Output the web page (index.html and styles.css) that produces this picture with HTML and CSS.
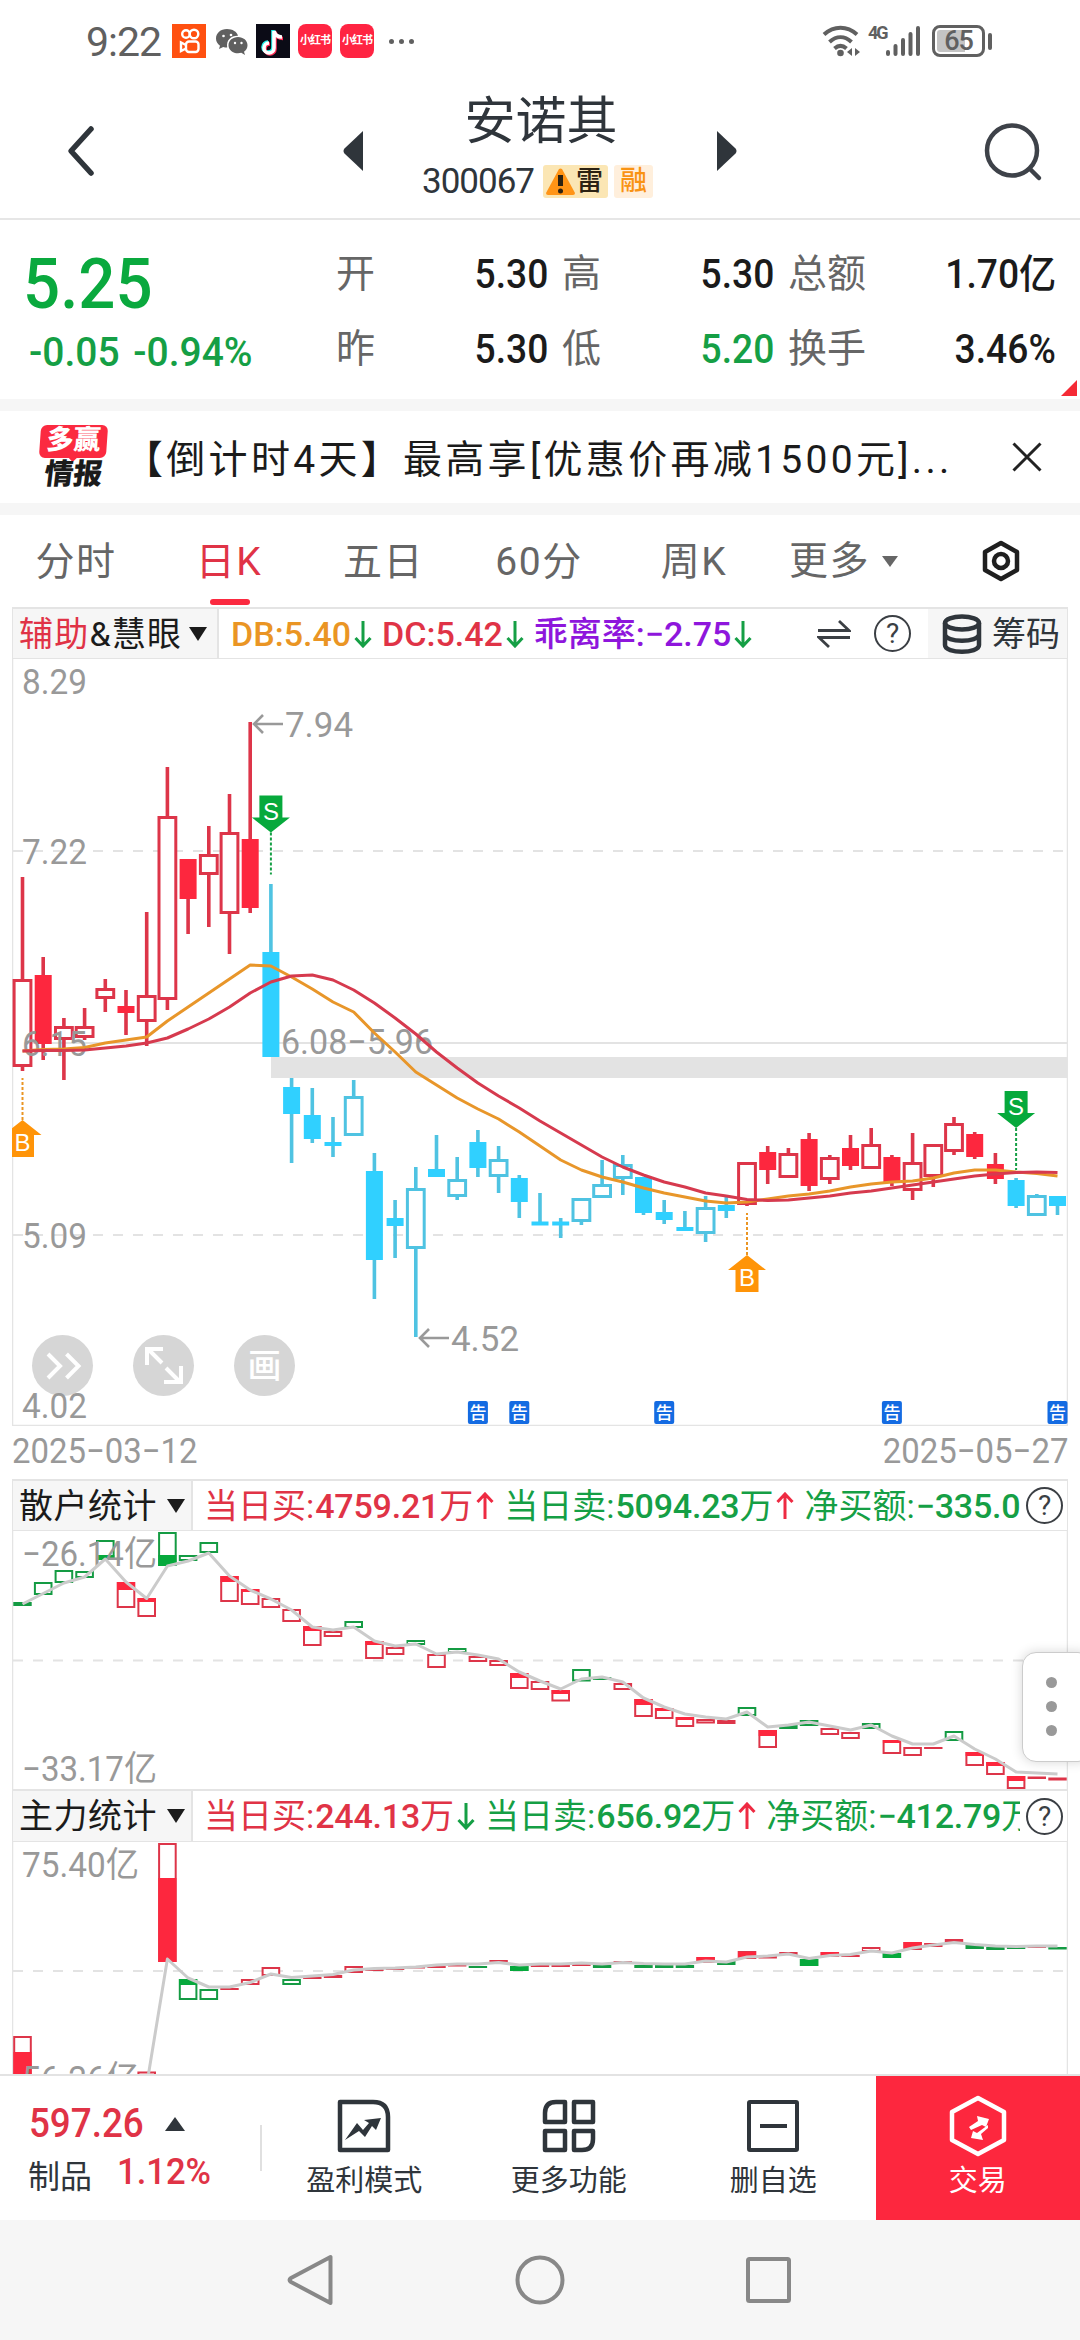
FILE: index.html
```html
<!DOCTYPE html>
<html lang="zh-CN">
<head>
<meta charset="utf-8">
<title>安诺其 300067</title>
<link rel="stylesheet" href="styles.css">
</head>
<body>
<div class="status">
  <div class="status-left">
    <span class="clock">9:22</span>
    <svg class="app kuaishou" viewBox="0 0 34 34"><rect width="34" height="34" fill="#ff5010"/><g fill="none" stroke="#fff" stroke-width="2.4"><circle cx="14" cy="10" r="3.8"/><circle cx="22" cy="10" r="4.3"/><rect x="14" y="17.500" width="12.500" height="10.500" rx="3"/><path d="M14 21l-5-2.500v8.500l5-2.500"/></g></svg>
    <svg class="app wechat" viewBox="0 0 34 34"><path fill="#606060" d="M13 5C6.500 5 2 9.200 2 14.500c0 3 1.500 5.500 4 7.200L5 25l4.200-2.100c1.300.4 2.600.6 4 .6C12 16 17 11.500 24 11.700 23 7.800 18.500 5 13 5z"/><path fill="#606060" d="M24 13c-5.300 0-9.500 3.600-9.500 8.200 0 4.500 4.200 8.100 9.500 8.100 1.200 0 2.300-.2 3.300-.5L31 31l-1-3.200c2.200-1.500 3.500-3.900 3.500-6.600C33.500 16.600 29.300 13 24 13z"/><g fill="#fff"><circle cx="9.500" cy="12" r="1.300"/><circle cx="17" cy="11" r="1.300"/><circle cx="21" cy="19" r="1.200"/><circle cx="27.500" cy="19" r="1.200"/></g></svg>
    <svg class="app" viewBox="0 0 34 34"><rect width="34" height="34" fill="#0b0b16"/><g fill="none" stroke-width="3.600"><path stroke="#25f4ee" d="M17 6v17a5 5 0 1 1-5-5M17 7c1 4 4 6 8 6"/><path stroke="#fe2c55" d="M19 8v17a5 5 0 1 1-5-5M19 8c1 4 4 6.500 8 6.500"/><path stroke="#fff" d="M18 7v17a5 5 0 1 1-5-5M18 7c1 4 4 6 8 6"/></g></svg>
    <span class="xhs">小红书</span>
    <span class="xhs">小红书</span>
    <span class="dots"><i></i><i></i><i></i></span>
  </div>
  <div class="status-right">
    <svg width="38" height="32" viewBox="0 0 38 32"><g fill="none" stroke="#606060" stroke-width="4"><path d="M2 9.500C12 .500 25 .500 35 9.500"/><path d="M7.500 17c7-6.500 15-6.500 22 0"/><path d="M12.500 23.500c4-3.500 8-3.500 12 0"/></g><circle cx="18.500" cy="28" r="3.300" fill="#606060"/><path fill="#606060" d="M30 23v8l-5-4zM33 23v8l5-4z"/></svg>
    <span class="net">4G</span>
    <svg class="signal" width="34" height="32" viewBox="0 0 34 32"><path stroke="#606060" stroke-width="4" stroke-linecap="round" d="M2 27v2M9.500 21v8M17 15v14M24.500 9v20M32 3v26"/></svg>
    <span class="battery"><b>65</b></span><i class="nub"></i>
  </div>
</div>

<header class="header">
  <svg class="back" width="32" height="54" viewBox="0 0 32 54"><path d="M26 5L6 27l20 22" fill="none" stroke="#2f353b" stroke-width="5.500" stroke-linecap="round" stroke-linejoin="round"/></svg>
  <svg class="prev" width="20" height="40" viewBox="0 0 20 40"><path d="M20 0v40L1.500 22.500q-2-2.500 0-5z" fill="#2f353b"/></svg>
  <div class="stock">
    <h1>安诺其</h1>
    <div class="code"><span>300067</span><em class="tag-risk"><svg width="32" height="32" viewBox="0 0 32 32"><path d="M15 4a2.500 2.500 0 0 1 3 0l13 24q0 2-2 2H4q-2 0-2-2z" fill="#ff9416"/><path d="M16.500 10v11" stroke="#2c2212" stroke-width="5"/><circle cx="16.500" cy="26" r="2.500" fill="#2c2212"/></svg>雷</em><em class="tag-margin">融</em></div>
  </div>
  <svg class="next" width="20" height="40" viewBox="0 0 20 40"><path d="M0 0v40L18.500 22.500q2-2.500 0-5z" fill="#2f353b"/></svg>
  <svg class="search" width="60" height="60" viewBox="0 0 60 60"><g fill="none" stroke="#3e4249" stroke-width="4.500" stroke-linecap="round"><circle cx="29" cy="28.500" r="25"/><path d="M47 47l9 9"/></g></svg>
</header>

<section class="quote">
  <div class="price">
    <strong>5.25</strong>
    <div class="chg"><span>-0.05</span><span>-0.94%</span></div>
  </div>
  <dl class="stats">
    <div><dt>开</dt><dd>5.30</dd></div><div><dt>高</dt><dd>5.30</dd></div><div><dt>总额</dt><dd>1.70亿</dd></div>
    <div><dt>昨</dt><dd>5.30</dd></div><div><dt>低</dt><dd class="down">5.20</dd></div><div><dt>换手</dt><dd>3.46%</dd></div>
  </dl>
  <i class="corner"></i>
</section>

<section class="banner">
  <div class="brand"><b>多赢</b><span>情报</span></div>
  <p>【倒计时4天】最高享[优惠价再减1500元]...</p>
  <svg width="30" height="30" viewBox="0 0 30 30"><path d="M1.500 1.500l27 27M28.500 1.500l-27 27" stroke="#222" stroke-width="3"/></svg>
</section>

<nav class="tabs">
  <span>分时</span><span class="active">日K</span><span>五日</span><span>60分</span><span>周K</span>
  <span class="more">更多<i></i></span>
  <svg width="40" height="42" viewBox="0 0 40 42"><g fill="none" stroke="#1f1f1f" stroke-width="4.500" stroke-linejoin="round"><path d="M20 3l16 9v18l-16 9-16-9V12z"/><circle cx="20" cy="21" r="7"/></g></svg>
</nav>

<main class="charts">
  <div class="ind-bar">
    <div class="ind-name main-name"><span><em>辅助</em>&amp;慧眼</span><i></i></div>
    <div class="ind-values main-values">
      <span class="orange">DB:5.40</span><svg class="arr down" viewBox="0 0 18 28"><path d="M9 1v24M1.500 18L9 26l7.500-8"/></svg>
      <span class="red">DC:5.42</span><svg class="arr down" viewBox="0 0 18 28"><path d="M9 1v24M1.500 18L9 26l7.500-8"/></svg>
      <span class="purple">乖离率:−2.75</span><svg class="arr down" viewBox="0 0 18 28"><path d="M9 1v24M1.500 18L9 26l7.500-8"/></svg>
    </div>
    <svg class="swap" width="34" height="30" viewBox="0 0 34 30"><path d="M1 11.500h31L22 2M33 18.500H2L12 28" fill="none" stroke="#3b3f44" stroke-width="2.800"/></svg>
    <span class="help">?</span>
    <div class="chips"><svg width="40" height="40" viewBox="0 0 40 40"><g fill="none" stroke="#2f353b" stroke-width="4.500"><ellipse cx="20" cy="9" rx="17" ry="6.500"/><path d="M3 9v22c0 9 34 9 34 0V9M3 20c0 9 34 9 34 0"/></g></svg>筹码</div>
  </div>
  <svg id="kline" class="plot kline" viewBox="12 659 1056 767"></svg>
  <div class="dates"><span>2025−03−12</span><span>2025−05−27</span></div>

  <div class="ind-bar">
    <div class="ind-name"><span>散户统计</span><i></i></div>
    <div class="ind-values">
      <span class="red">当日买:<b>4759.21</b>万</span><svg class="arr up" viewBox="0 0 18 28"><path d="M9 27V3M1.500 10L9 2l7.500 8"/></svg>
      <span class="green">当日卖:<b>5094.23</b>万</span><svg class="arr up" viewBox="0 0 18 28"><path d="M9 27V3M1.500 10L9 2l7.500 8"/></svg>
      <span class="green">净买额:<b>−335.0</b></span>
    </div>
    <span class="help">?</span>
  </div>
  <svg id="retail" class="plot retail" viewBox="12 1531 1056 258"></svg>

  <div class="ind-bar second">
    <div class="ind-name"><span>主力统计</span><i></i></div>
    <div class="ind-values">
      <span class="red">当日买:<b>244.13</b>万</span><svg class="arr down" viewBox="0 0 18 28"><path d="M9 1v24M1.500 18L9 26l7.500-8"/></svg>
      <span class="green">当日卖:<b>656.92</b>万</span><svg class="arr up" viewBox="0 0 18 28"><path d="M9 27V3M1.500 10L9 2l7.500 8"/></svg>
      <span class="green">净买额:<b>−412.79</b>万</span>
    </div>
    <span class="help">?</span>
  </div>
  <svg id="force" class="plot force" viewBox="12 1842 1056 234"></svg>
  <div class="handle"><i></i><i></i><i></i></div>
</main>

<footer class="actions">
  <div class="index"><div><b>597.26</b><i></i></div><div><span>制品</span><em>1.12%</em></div></div>
  <div class="action"><svg viewBox="0 0 54 54"><path d="M3 3h33q15 0 15 15v33H3z" fill="none" stroke="#2f353b" stroke-width="4.500" stroke-linejoin="round"/><path d="M8 41l12-17 6 7 6-7-5-3 17-2-5 12-4-4-7 11-6-6z" fill="#2f353b"/></svg><span>盈利模式</span></div>
  <div class="action"><svg viewBox="0 0 54 54"><g fill="none" stroke="#2f353b" stroke-width="4.500" stroke-linejoin="round"><path d="M14 3h9v20H3V14Q3 3 14 3zM32 3h19v20H32zM3 32h20v19H3zM32 32h19v8q0 11-11 11h-8z"/></g></svg><span>更多功能</span></div>
  <div class="action"><svg viewBox="0 0 54 54"><rect x="3" y="3" width="48" height="48" rx="1" fill="none" stroke="#2f353b" stroke-width="4"/><path d="M14 27h27" stroke="#2f353b" stroke-width="4"/></svg><span>删自选</span></div>
  <div class="action trade"><svg viewBox="0 0 60 62"><path d="M30 3l26 14v28L30 59 4 45V17z" fill="none" stroke="#fff" stroke-width="4.500" stroke-linejoin="round"/><path d="M21 32l9-6-1-5 12 3-3 8-4-2-11 5zM40 33l-7 6 2 6-12-2 2-7 4 2 11-8z" fill="#fff"/></svg><span>交易</span></div>
</footer>

<div class="sysnav">
  <svg width="50" height="56" viewBox="0 0 50 56"><path d="M44.500 5v46L5 30q-3-2 0-4z" stroke-linejoin="round"/></svg>
  <svg width="54" height="54" viewBox="0 0 54 54"><circle cx="27" cy="27" r="22.500"/></svg>
  <svg width="50" height="50" viewBox="0 0 50 50"><rect x="4" y="4" width="41" height="42" rx="1.500"/></svg>
</div>
<script src="chart.js"></script>
</body>
</html>
```
FILE: styles.css
```css
* { box-sizing: border-box; }
html, body { margin: 0; padding: 0; }
body {
  width: 1080px; height: 2340px; overflow: hidden;
  display: flex; flex-direction: column;
  background: #fff; color: #1b1b1b;
  font-family: Roboto, "Noto Sans CJK SC", sans-serif;
  line-height: 1;
}
em, i { font-style: normal; }
svg { display: block; flex: none; }
.red { color: #e03346; } .green { color: #159f45; } .orange { color: #ea9524; } .purple { color: #8e16dc; }

.status { height: 82px; flex: none; display: flex; justify-content: space-between; padding: 24px 88px 0 86px; color: #606060; }
.status-left, .status-right { display: flex; height: 34px; align-items: center; }
.clock { font-size: 41px; width: 86px; letter-spacing: -1px; font-weight: 400; padding-top: 2px; }
.app { width: 34px; height: 34px; margin-right: 8px; }
.xhs { width: 34px; height: 34px; border-radius: 8px; background: #ff2442; color: #fff; font-size: 11px; font-weight: 700; line-height: 33px; text-align: center; margin-right: 8px; letter-spacing: -1px; }
.dots { display: flex; gap: 5px; margin-left: 7px; }
.dots i { width: 5px; height: 5px; border-radius: 50%; background: #606060; }
.net { align-self: flex-start; font-size: 18px; font-weight: 700; letter-spacing: -2px; margin: 0 0 0 8px; width: 18px; }
.signal { margin-right: 12px; }
.battery { width: 53px; height: 32px; border: 3px solid #606060; border-radius: 8px; padding: 2px; }
.battery b { display: block; height: 22px; line-height: 23px; text-align: center; font-size: 27px; font-weight: 500; letter-spacing: -1px; background: linear-gradient(90deg, #c4c4c4 65%, transparent 65%); border-radius: 3px; }
.nub { width: 4px; height: 17px; background: #606060; border-radius: 2px; margin-left: 3px; }

.header { height: 138px; flex: none; border-bottom: 2px solid #e6e6e6; display: flex; padding-left: 65px; }
.back { margin: 42px 246px 0 0; }
.prev, .next { margin-top: 49px; }
.stock { width: 354px; text-align: center; padding-left: 2px; }
.stock h1 { margin: 13px 0 0; font-size: 51px; line-height: 54px; font-weight: 400; color: #2f353b; }
.code { display: flex; margin: 15px 0 0 57px; height: 34px; align-items: center; font-size: 35px; color: #2f353b; }
.code span { width: 121px; letter-spacing: -1px; text-align: left; }
.tag-risk, .tag-margin { display: flex; align-items: center; height: 33px; border-radius: 3px; font-size: 27px; font-weight: 500; }
.tag-risk { width: 65px; background: #fbe6b4; color: #2c2212; margin-right: 6px; }
.tag-risk svg { margin-left: 1px; }
.tag-margin { width: 39px; justify-content: center; background: #ffefdc; color: #f99313; }
.search { margin: 40px 0 0 246px; }

.quote { height: 179px; flex: none; position: relative; display: flex; border-bottom: 0; }
.price { width: 336px; padding: 31px 0 0 23px; color: #0aa93e; }
.price strong { display: block; font-size: 71px; line-height: 66px; font-weight: 500; transform: scaleX(.92); transform-origin: 0 0; }
.chg { display: flex; gap: 14px; margin: 18px 0 0 6px; font-size: 40px; line-height: 36px; font-weight: 500; color: #159f45; transform: scaleX(.975); transform-origin: 0 0; }
.stats { margin: 0; display: grid; grid-template-columns: 212px 212px 268px; column-gap: 14px; grid-template-rows: 75px 75px; padding-top: 17px; height: 179px; }
.stats div { display: flex; justify-content: space-between; align-items: center; font-size: 39px; }
.stats dt { color: #666; }
.stats dd { margin: 0; font-weight: 500; font-size: 40px; color: #1b1b1b; transform: scaleX(.93); transform-origin: 100% 0; }
.stats dd.down { color: #159f45; }
.corner { position: absolute; right: 3px; bottom: 3px; border: solid transparent; border-width: 8px; border-right-color: #f52a35; border-bottom-color: #f52a35; }

.banner { height: 116px; flex: none; border: solid #f6f6f6; border-width: 12px 0; display: flex; align-items: center; padding-left: 40px; }
.brand { width: 67px; height: 66px; text-align: center; font-weight: 900; padding-top: 1px; }
.brand b { display: block; position: relative; height: 33px; border-radius: 6px; background: #fb2a40; color: #fff; font-size: 27px; line-height: 31px; transform: skewX(-4deg); }
.brand b::after { content: ""; position: absolute; left: 29px; top: 32px; border: solid transparent; border-width: 5px 5px 0; border-top-color: #fb2a40; }
.brand span { display: block; font-size: 29px; line-height: 26px; margin-top: 3px; transform: skewX(-7deg); }
.banner p { margin: 6px 0 0 17px; width: 888px; font-size: 39px; letter-spacing: 3.300px; white-space: nowrap; }

.tabs { height: 92px; flex: none; position: relative; display: grid; grid-template-columns: 152px 154px 155px 156px 154px 145px 170px; align-items: center; justify-items: center; font-size: 39px; letter-spacing: 1.500px; color: #666; }
.tabs span { position: relative; height: 60px; line-height: 62px; }
.tabs .active { color: #e03346; }
.tabs .active::after { content: ""; position: absolute; left: 50%; bottom: -14px; margin-left: -19px; width: 40px; height: 6px; border-radius: 3px; background: #fb2a40; }
.more { display: flex; align-items: center; gap: 12px; }
.more i { border: solid transparent; border-width: 11px 8.500px 0; border-top-color: #666; }

.charts { position: relative; height: 1469px; flex: none; border-bottom: 2px solid #e3e3e3; padding: 0 12px; overflow: hidden; }
.ind-bar { height: 52px; display: flex; border: 2px solid #e4e4e4; border-width: 2px 1px 1px; align-items: center; font-size: 34px; width: 1056px; }
.ind-bar.second { height: 53px; }
.ind-name { width: 180px; height: 100%; background: #f6f6f6; border-right: 2px solid #e4e4e4; display: flex; align-items: center; padding-left: 6px; gap: 10px; flex: none; white-space: nowrap; letter-spacing: .500px; }
.ind-name em { color: #e03346; }
.ind-name i { border: solid transparent; border-width: 14px 9.500px 0; border-top-color: #1b1b1b; }
.main-name { width: 206px; letter-spacing: 1.200px; gap: 7px; }
.ind-values { display: flex; align-items: center; width: 827px; padding-left: 11px; overflow: hidden; white-space: nowrap; height: 100%; flex: none; }
.ind-values b { font-weight: 500; letter-spacing: -.200px; margin-left: 1px; }
.main-values span { font-weight: 500; }
.main-values { width: 598px; padding-left: 12px; }
.arr { width: 18px; height: 28px; margin: 0 10px 0 3px; fill: none; stroke-width: 3; }
.arr.down { stroke: #159f45; } .arr.up { stroke: #ee2a42; }
.help { width: 37px; height: 37px; flex: none; border: 2.500px solid #3b3f44; border-radius: 50%; font-size: 28px; line-height: 33px; text-align: center; color: #3b3f44; margin-left: 6px; }
.swap { margin: 0 23px 0 0; }
.main-values ~ .help { margin: 0 17px 0 0; }
.chips { width: 139px; height: 49px; background: #f6f6f6; display: flex; align-items: center; gap: 10px; padding-left: 14px; color: #2f353b; flex: none; }
.plot { width: 1056px; overflow: hidden; }
.kline { height: 767px; } .retail { height: 258px; } .force { height: 234px; }
.plot text { font-family: Roboto, "Noto Sans CJK SC", sans-serif; font-size: 35px; font-weight: 400; fill: #999; }
.plot text.mark { font-size: 24px; fill: #fff; text-anchor: middle; font-family: "Liberation Sans", sans-serif; }
.plot text.note { font-size: 17px; fill: #fff; text-anchor: middle; font-family: "Noto Sans CJK SC", sans-serif; font-weight: 500; }
.plot text.tool { font-size: 34px; fill: #fff; text-anchor: middle; font-family: "Noto Sans CJK SC", sans-serif; font-weight: 500; }
.dates { height: 53px; display: flex; justify-content: space-between; align-items: center; font-size: 35px; color: #999; padding-bottom: 3px; }
.dates span { transform: scaleX(.94); transform-origin: 0 0; }
.dates span + span { transform-origin: 100% 0; }
.handle { position: absolute; left: 1022px; top: 1045px; width: 70px; height: 110px; background: #fff; border: 1px solid #ccc; border-radius: 14px; box-shadow: 0 0 12px rgba(0,0,0,.16); padding: 24px 0 0 23px; display: flex; flex-direction: column; gap: 13px; }
.handle i { width: 11px; height: 11px; border-radius: 50%; background: #999; }

.actions { height: 144px; flex: none; display: flex; }
.index { width: 262px; padding: 28px 0 0 28px; position: relative; border-right: 0; color: #e03346; flex: none; }
.index::after { content: ""; position: absolute; right: 0; top: 49px; width: 2px; height: 46px; background: #e0e0e0; }
.index div { display: flex; align-items: center; height: 40px; }
.index div + div { margin-top: 13px; }
.index b { font-size: 40px; font-weight: 500; transform: scaleX(.92); transform-origin: 0 0; width: 137px; padding-left: 1px; }
.index i { border: solid transparent; border-width: 0 10px 14px; border-bottom-color: #2f353b; }
.index span { font-size: 32px; color: #2f353b; width: 89px; }
.index em { font-size: 36px; font-weight: 500; transform: scaleX(.96); transform-origin: 0 0; margin-top: -10px; }
.action { width: 204.600px; display: flex; flex-direction: column; align-items: center; padding-top: 23px; font-size: 29px; color: #2f353b; }
.action svg { width: 54px; height: 54px; }
.action span { margin-top: 14px; white-space: nowrap; }
.trade { background: #fd273e; color: #fff; padding-top: 19px; }
.trade svg { width: 60px; height: 62px; }
.trade span { margin-top: 10px; }

.sysnav { height: 120px; flex: none; background: #f6f6f6; position: relative; display: flex; align-items: center; justify-content: center; padding-left: 0; gap: 177px; }
.sysnav svg { fill: none; stroke: #888; stroke-width: 4; }
```
FILE: chart.js
```js
const NS = "http://www.w3.org/2000/svg";
const x = i => 22.5 + i * 20.7;

function el(parent, name, attrs, text) {
  const n = document.createElementNS(NS, name);
  for (const k in attrs) n.setAttribute(k, attrs[k]);
  if (text !== undefined) n.textContent = text;
  parent.appendChild(n);
  return n;
}
function label(p, tx, ty, s, w) {
  el(p, "text", w ? { x: tx, y: ty, textLength: w, lengthAdjust: "spacingAndGlyphs" } : { x: tx, y: ty }, s);
}
function line(p, ys, colour, start = 0, width = 3) {
  const pts = ys.map((y, i) => x(i + start).toFixed(1) + "," + y).join(" ");
  el(p, "polyline", { points: pts, fill: "none", stroke: colour, "stroke-width": width, "stroke-linejoin": "round" });
}
function grid(p, y, dash) {
  el(p, "path", { d: `M13 ${y}H1067`, stroke: "#e3e3e3", "stroke-width": 2, ...(dash ? { "stroke-dasharray": "10 10" } : {}) });
}
function frame(p, y0, y1) {
  el(p, "path", { d: `M12.500 ${y0}V${y1}M1067.500 ${y0}V${y1}`, stroke: "#e4e4e4", "stroke-width": 1.5 });
}

/* Daily candles: kind, high, body top, body bottom, low.
   R / B are solid red / blue bodies, r / b are hollow ones. */
const candles = [
  ["r",877,979,1067,1071],["R",957,975,1044,1060],["r",1018,1026,1040,1080],["r",1008,1026,1038,1040],
  ["r",979,988,999,1012],["R",990,1006,1013,1035],["r",912,995,1022,1046],["r",767,816,1000,1010],
  ["R",859,859,899,934],["r",826,854,875,927],["r",794,832,914,954],["R",722,839,908,913],
  ["B",884,952,1057,1057],["B",1078,1087,1114,1163],["B",1088,1115,1139,1143],["B",1117,1142,1146,1157],
  ["b",1080,1096,1136,1136],["B",1153,1171,1260,1299],["B",1200,1218,1226,1258],["b",1167,1188,1249,1337],
  ["B",1135,1169,1177,1177],["b",1157,1179,1197,1200],["B",1130,1142,1168,1177],["b",1146,1159,1177,1193],
  ["B",1175,1178,1202,1218],["B",1193,1221.5,1225.5,1225],["B",1218,1221.5,1225.5,1238],["b",1198,1198,1222,1225],
  ["b",1160,1184,1198,1198],["b",1155,1164,1179,1195],["B",1177,1177,1213,1215],["B",1200,1212,1220,1224],
  ["B",1211,1227,1231,1231],["b",1196,1207,1234,1242],["B",1195,1205,1211,1218],["r",1162,1162,1205,1206],
  ["R",1146,1152,1170,1184],["r",1148,1153,1178,1178],["R",1133,1139,1186,1191],["r",1155,1157,1180,1184],
  ["R",1135,1148,1166,1170],["r",1128,1144,1169,1169],["R",1155,1157,1182,1186],["r",1133,1162,1191,1200],
  ["r",1144,1144,1177,1187],["r",1117,1123,1152,1155],["R",1132,1134,1157,1159],["R",1153,1164,1179,1184],
  ["B",1178,1180,1206,1208],["b",1194,1195,1216,1216],["B",1196,1196,1206,1215]
];
const db = [1051,1049.5,1049,1047.5,1043,1040,1037,1021,1007,993,979,965,966,977,989,1002,1012,1033,1052,1072,1085,1098,1109,1119,1132,1146,1160,1170,1177,1182,1188,1193,1197,1201,1203,1202,1199,1196,1194,1191,1187,1184,1182,1181,1178,1173,1170,1170,1172,1173.5,1176];
const dc = [1051,1050.5,1050.5,1050,1048,1046,1043,1038,1029,1019,1007,993,982,976,975,980,990,1003,1018,1034,1052,1068,1083,1096,1108,1121,1133,1145,1157,1167,1175,1182,1187,1193,1196,1199.5,1200.5,1200,1198,1196,1193,1191,1188,1185,1182,1179,1176,1174,1172.5,1172,1172.5];

function marker(p, i, tip, up) {
  const c = x(i), col = up ? "#ff9408" : "#06a93c", d = up ? 1 : -1;
  el(p, "path", { d: `M${c} ${tip}l19 ${15 * d}h-7.500v${22 * d}h-23v${-22 * d}h-7.500z`, fill: col });
  el(p, "path", { d: `M${c} ${tip}V${tip - 42 * d}`, stroke: up ? "#ea9524" : "#159f45", "stroke-width": 2, "stroke-dasharray": "3 2" });
  el(p, "text", { class: "mark", x: c, y: up ? tip + 31 : tip - 13 }, up ? "B" : "S");
}

const k = document.getElementById("kline");
grid(k, 851, true); grid(k, 1043, false); grid(k, 1235, true);
frame(k, 659, 1426);
el(k, "path", { d: "M12 1425.500H1068", stroke: "#e4e4e4", "stroke-width": 1.5 });
el(k, "rect", { x: 271, y: 1057, width: 796, height: 21, fill: "#e3e3e3" });
candles.forEach(([kind, hi, top, bot, lo], i) => {
  const red = kind.toLowerCase() === "r", solid = kind < "a", c = x(i), s = red ? "#dd3549" : "#4fc3e2";
  el(k, "path", { d: `M${c} ${hi}V${top + 1}M${c} ${bot - 1}V${lo}`, stroke: s, "stroke-width": 3.6 });
  if (solid) el(k, "rect", { x: c - 8.5, y: top, width: 17, height: bot - top, fill: red ? "#fd273e" : "#30d0ff" });
  else el(k, "rect", { x: c - 8.4, y: top + 1.5, width: 16.8, height: bot - top - 3, fill: "#fff", stroke: s, "stroke-width": 3 });
});
label(k, 22, 694, "8.29", 65); label(k, 22, 864, "7.22", 65);
label(k, 22, 1056, "6.15", 65); label(k, 22, 1248, "5.09", 65);
label(k, 281, 1054, "6.08−5.96", 152); label(k, 285, 737, "7.94", 68); label(k, 451, 1351, "4.52", 68);
[[253, 724], [419, 1338]].forEach(([ax, ay]) =>
  el(k, "path", { d: `M${ax + 30} ${ay}H${ax + 1}M${ax + 10} ${ay - 9}l-9 9 9 9`, fill: "none", stroke: "#999", "stroke-width": 2.6 }));
line(k, db, "#e8962a"); line(k, dc, "#d63a4e");
marker(k, 0, 1120, true); marker(k, 35, 1255, true); marker(k, 12, 832.5, false); marker(k, 48, 1128, false);
[22, 24, 31, 42, 50].forEach(i => {
  el(k, "rect", { x: x(i) - 10, y: 1401, width: 20, height: 23, rx: 2, fill: "#146be2" });
  el(k, "text", { class: "note", x: x(i), y: 1419 }, "告");
});
[62.5, 163.5, 264.5].forEach(c => el(k, "circle", { cx: c, cy: 1365.5, r: 30.5, fill: "#d6d6d6" }));
el(k, "path", { d: "M48 1354l12 12-12 12M66.500 1354l12 12-12 12M162 1363l-13-13M147 1365v-16h16M166 1368l13 13M181 1366v16h-17", fill: "none", stroke: "#fff", "stroke-width": 4 });
el(k, "text", { class: "tool", x: 264.5, y: 1378 }, "画");
label(k, 22, 1418, "4.02", 65);

/* Flow bars: colour, top, bottom, and an optional solid span [from, to]. */
function bars(p, data) {
  data.forEach((b, i) => {
    if (!b) return;
    const [kind, top, bot, f0, f1] = b, col = kind === "r" ? "#dd3549" : "#149b43", c = x(i);
    if (bot - top < 4.2) { el(p, "rect", { x: c - 9.2, y: top, width: 18.4, height: bot - top, fill: col }); return; }
    el(p, "rect", { x: c - 8.3, y: top + 1, width: 16.6, height: bot - top - 2, fill: "#fff", stroke: col, "stroke-width": 2 });
    if (f0) el(p, "rect", { x: c - 9, y: f0, width: 18, height: f1 - f0, fill: kind === "r" ? "#fd273e" : "#06a93c" });
  });
}

const retail = document.getElementById("retail");
grid(retail, 1660.5, true); frame(retail, 1531, 1789);
bars(retail, [
  ["g",1602,1606],["g",1582,1595],["g",1570,1583],["g",1571,1578],["g",1540,1560,1555,1560],["r",1582,1608,1582,1590],
  ["r",1598,1617,1598,1602],["g",1532,1566,1555,1566],["g",1555,1561],["g",1542,1553],["r",1576,1602,1576,1582],
  ["r",1589,1605,1589,1592],["r",1598,1608],["r",1609,1622],["r",1626,1646,1626,1631],["r",1631,1637],["g",1621,1628],
  ["r",1641,1659,1641,1645],["r",1647,1655],["g",1640,1645],["r",1654,1668],["g",1648,1653],["r",1656,1662],["r",1660,1666],
  ["r",1673,1689,1673,1678],["r",1681,1690],["r",1690,1701.5,1690,1694],["g",1669,1681.5],["g",1677,1680],["r",1683,1690],
  ["r",1699,1717,1699,1705],["r",1708,1719,1708,1711],["r",1717,1727,1717,1720],["r",1719,1723.5],["r",1720,1724],
  ["g",1707,1716],["r",1730,1748,1730,1736],["g",1725,1729],["g",1720,1726],["r",1728,1735],["r",1732,1739],["g",1723,1729],
  ["r",1740,1754,1740,1743],["r",1747,1756],["r",1747,1749],["g",1731,1741],["r",1752,1766,1752,1756],["r",1762,1775,1762,1766],
  ["r",1776,1789,1776,1781],["r",1776.5,1779],["r",1777.5,1780.5]
]);
label(retail, 22, 1566, "−26.14亿", 135); label(retail, 22, 1781, "−33.17亿", 135);
line(retail, [1604,1593.5,1583,1577,1559,1582,1598.5,1566,1561,1553,1576,1590,1599,1610,1627,1630,1627,1641,1646,1644,1654,1652,1655,1659,1672,1681,1689,1679,1677,1682,1698,1707,1714,1717,1719,1712,1727,1725,1722,1726,1730,1725,1736,1744,1744,1736,1749,1759,1772,1773,1774], "#cbcbcb");

const force = document.getElementById("force");
grid(force, 1971, true); frame(force, 1842, 2077);
label(force, 22, 1877, "75.40亿", 117);
bars(force, [
  ["r",2036,2095,2052,2095],,,,,,["r",2071.5,2095],["r",1843,1962,1878,1962],["g",1979,2000,1979,1985],["g",1989,2000],
  ["r",1988,1990],["r",1979,1985],["r",1967,1976],["g",1979,1985],["r",1977,1979],["r",1975,1978],["r",1966,1973],
  ["r",1968.5,1971],["r",1968,1970],["r",1967,1968.5],["r",1966,1968],["r",1964.5,1966.5],["g",1966,1968],["r",1960,1964],
  ["g",1966,1971,1966,1971],["r",1965,1967],["r",1965,1967],["r",1963,1966],["g",1965,1968],["r",1961,1964],["g",1965,1968],
  ["g",1965,1968],["g",1965,1968],["r",1957,1963,1957,1962],["g",1961,1965],["r",1951,1959,1952,1957],["r",1956,1958.5],
  ["r",1952,1955],["g",1959,1966,1959,1966],["r",1952,1957,1952,1955],["r",1955,1957],["r",1947,1952],["g",1953,1958,1953,1958],
  ["r",1942,1950,1942,1948],["r",1943,1947],["r",1939,1943],["g",1945,1949],["g",1947,1950],["g",1947,1949],["r",1946,1948],["g",1947,1949.5]
]);
line(force, [2085,1959,1978,1987,1987,1982.5,1974,1977.5,1976,1974.5,1970,1968.5,1968,1967,1965,1964,1964,1962.5,1965,1964,1964,1963,1964,1962.5,1963.5,1964,1964,1961,1962,1957,1956,1954,1958.5,1955.5,1954.5,1951,1953,1948,1945,1942.5,1944.5,1946,1946.5,1946,1946], "#cbcbcb", 6);
label(force, 22, 2091, "56.26亿", 117);
```
